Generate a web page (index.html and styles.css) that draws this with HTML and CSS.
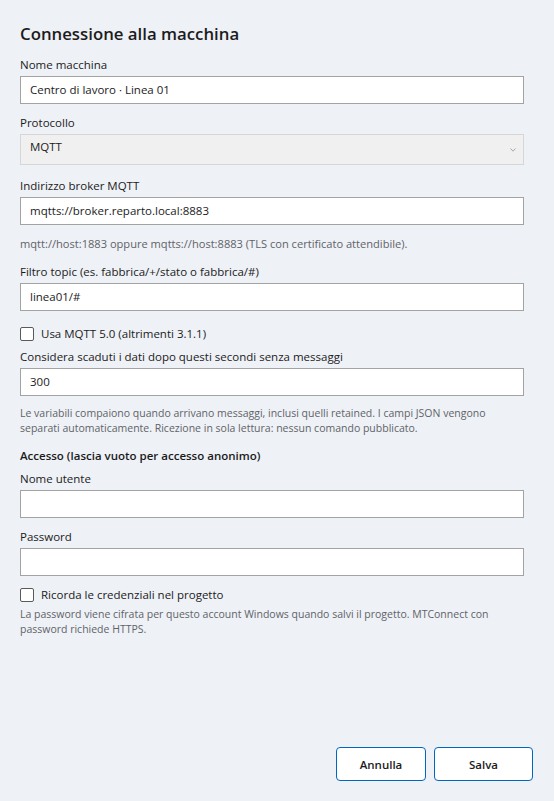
FILE: index.html
```html
<!DOCTYPE html>
<html lang="it">
<head>
<meta charset="utf-8">
<title>Connessione alla macchina</title>
<link rel="stylesheet" href="styles.css">
</head>
<body>
<div class="dialog">
  <div class="content">
    <h1 class="title">Connessione alla macchina</h1>

    <div class="field f-name">
      <div class="label">Nome macchina</div>
      <div class="input">Centro di lavoro · Linea 01</div>
    </div>

    <div class="field f-proto">
      <div class="label">Protocollo</div>
      <div class="select">
        <span class="select-text">MQTT</span>
        <svg class="chevron" width="6" height="4" viewBox="0 0 6 4"><path d="M0.5 0.5 L3 3.2 L5.5 0.5" fill="none" stroke="#a8a8a8" stroke-width="1"/></svg>
      </div>
    </div>

    <div class="field f-broker">
      <div class="label">Indirizzo broker MQTT</div>
      <div class="input">mqtts://broker.reparto.local:8883</div>
    </div>

    <div class="help h-broker">mqtt://host:1883 oppure mqtts://host:8883 (TLS con certificato attendibile).</div>

    <div class="field f-topic">
      <div class="label">Filtro topic (es. fabbrica/+/stato o fabbrica/#)</div>
      <div class="input">linea01/#</div>
    </div>

    <label class="check c-mqtt5"><span class="box"></span><span>Usa MQTT 5.0 (altrimenti 3.1.1)</span></label>

    <div class="field f-stale">
      <div class="label">Considera scaduti i dati dopo questi secondi senza messaggi</div>
      <div class="input">300</div>
    </div>

    <div class="help h-stale">Le variabili compaiono quando arrivano messaggi, inclusi quelli retained. I campi JSON vengono separati automaticamente. Ricezione in sola lettura: nessun comando pubblicato.</div>

    <div class="section">Accesso (lascia vuoto per accesso anonimo)</div>

    <div class="field f-user">
      <div class="label">Nome utente</div>
      <div class="input"></div>
    </div>

    <div class="field f-pass">
      <div class="label">Password</div>
      <div class="input"></div>
    </div>

    <label class="check c-remember"><span class="box"></span><span>Ricorda le credenziali nel progetto</span></label>

    <div class="help h-pass">La password viene cifrata per questo account Windows quando salvi il progetto. MTConnect con password richiede HTTPS.</div>
  </div>

  <div class="footer">
    <button class="btn btn-cancel">Annulla</button>
    <button class="btn btn-save">Salva</button>
  </div>
</div>
</body>
</html>
```

FILE: styles.css
```css
html, body {
  margin: 0;
  padding: 0;
}
body {
  background: #eef1f6;
  font-family: "Open Sans", "Noto Sans", "Liberation Sans", sans-serif;
  font-size: 11.5px;
  color: #1b1b1b;
  width: 554px;
  height: 801px;
  overflow: hidden;
}
.dialog {
  display: flex;
  flex-direction: column;
  height: 801px;
}
.content {
  flex: 1;
  display: flex;
  flex-direction: column;
  padding: 22px 30px 0 20px;
}
.title {
  margin: 0;
  font-size: 16.8px;
  line-height: 24px;
  font-weight: 600;
  color: #1c1c1c;
}
.field {
  display: flex;
  flex-direction: column;
}
.label {
  line-height: 16px;
  margin-bottom: 3px;
}
.input {
  height: 28px;
  box-sizing: border-box;
  background: #ffffff;
  border: 1px solid #a3a3a3;
  padding: 0 9px;
  line-height: 26px;
}
.select {
  height: 31px;
  box-sizing: border-box;
  background: #f0f0f0;
  border: 1px solid #d6d6d6;
  padding: 0 0 0 9px;
  display: flex;
  align-items: flex-start;
  justify-content: space-between;
}
.select-text {
  line-height: 24px;
}
.chevron {
  margin: 13px 7px 0 0;
}
.help {
  font-size: 10.5px;
  line-height: 15px;
  color: #5f6368;
}
.section {
  font-weight: 600;
  line-height: 16px;
}
.check {
  display: flex;
  align-items: center;
  gap: 7px;
  line-height: 16px;
}
.box {
  width: 14px;
  height: 14px;
  box-sizing: border-box;
  border: 1px solid #5a5a5a;
  border-radius: 2px;
  background: #ffffff;
}
.f-name { margin-top: 11px; }
.f-proto { margin-top: 11px; }
.f-broker { margin-top: 13px; }
.h-broker { margin-top: 11px; font-size: 11.1px; }
.f-topic { margin-top: 13px; }
.c-mqtt5 { margin-top: 15px; }
.f-stale { margin-top: 7px; }
.h-stale { margin-top: 10px; }
.section { margin-top: 12px; }
.f-user { margin-top: 7px; }
.f-pass { margin-top: 11px; }
.c-remember { margin-top: 11px; }
.h-pass { margin-top: 4px; }

.footer {
  display: flex;
  justify-content: flex-end;
  gap: 8px;
  padding: 0 21px 20px 0;
}
.btn {
  height: 34px;
  box-sizing: border-box;
  background: #ffffff;
  border: 1px solid #0067c0;
  border-radius: 4px;
  font-family: inherit;
  font-size: 11.5px;
  font-weight: 600;
  color: #1b1b1b;
  padding: 0;
}
.btn-cancel { width: 90px; }
.btn-save { width: 99px; }
```
